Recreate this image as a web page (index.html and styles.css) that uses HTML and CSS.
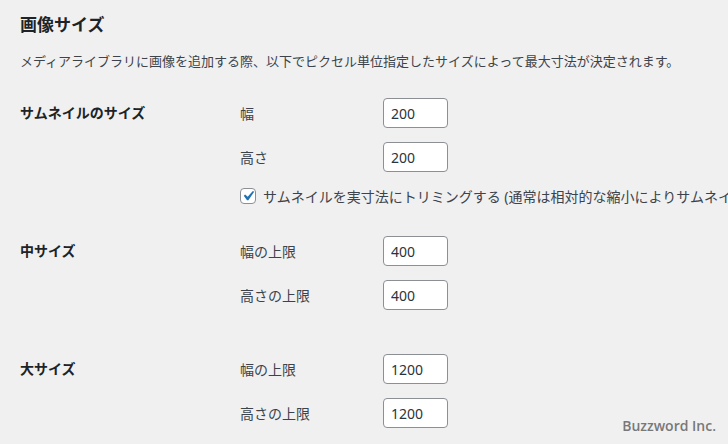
FILE: index.html
```html
<!DOCTYPE html>
<html>
<head>
    <meta charset="utf-8">
    <title>メディア設定</title>
    <link rel="stylesheet" href="styles.css">
</head>
<body>
    <div class="wrap">
        <h2>画像サイズ</h2>
        <p class="description">メディアライブラリに画像を追加する際、以下でピクセル単位指定したサイズによって最大寸法が決定されます。</p>

        <div class="size-row thumb">
            <div class="row-label">サムネイルのサイズ</div>
            <div class="fields">
                <div class="field">
                    <label class="field-label">幅</label>
                    <input type="text" class="small-text" value="200">
                </div>
                <div class="field">
                    <label class="field-label">高さ</label>
                    <input type="text" class="small-text" value="200">
                </div>
                <div class="check-line">
                    <span class="checkbox">
                        <svg viewBox="0 0 20 20" width="20" height="20"><path d="M14.83 4.89l1.34.94-5.81 8.38H9.02L5.78 9.67l1.34-1.25 2.57 2.4z" fill="#2271b1"/></svg>
                    </span>
                    <span>サムネイルを実寸法にトリミングする (通常は相対的な縮小によりサムネイルを作成します)</span>
                </div>
            </div>
        </div>

        <div class="size-row medium">
            <div class="row-label">中サイズ</div>
            <div class="fields">
                <div class="field">
                    <label class="field-label">幅の上限</label>
                    <input type="text" class="small-text" value="400">
                </div>
                <div class="field">
                    <label class="field-label">高さの上限</label>
                    <input type="text" class="small-text" value="400">
                </div>
            </div>
        </div>

        <div class="size-row large">
            <div class="row-label">大サイズ</div>
            <div class="fields">
                <div class="field">
                    <label class="field-label">幅の上限</label>
                    <input type="text" class="small-text" value="1200">
                </div>
                <div class="field">
                    <label class="field-label">高さの上限</label>
                    <input type="text" class="small-text" value="1200">
                </div>
            </div>
        </div>
    </div>

    <div class="credit">Buzzword Inc.</div>
</body>
</html>
```

FILE: styles.css
```css
html, body {
    height: 100%;
}
body {
    margin: 0;
    background: #f0f0f1;
    color: #3c434a;
    font-family: "Noto Sans", "Noto Sans CJK JP", sans-serif;
    font-size: 14px;
    overflow: hidden;
    position: relative;
}
.wrap {
    padding: 14px 20px 0;
    white-space: nowrap;
}
h2 {
    margin: 0;
    font-size: 17px;
    line-height: 22px;
    font-weight: 700;
    color: #1d2327;
}
.description {
    margin: 15px 0 0;
    font-size: 13px;
    line-height: 20px;
}
.size-row {
    display: flex;
}
.thumb {
    margin-top: 27px;
}
.medium {
    margin-top: 30px;
}
.large {
    margin-top: 44px;
}
.row-label {
    width: 220px;
    flex-shrink: 0;
    line-height: 30px;
    font-weight: 700;
    color: #1d2327;
}
.fields {
    display: flex;
    flex-direction: column;
    gap: 14px;
}
.field {
    display: flex;
    align-items: center;
    height: 30px;
}
.field-label {
    width: 143px;
}
.small-text {
    box-sizing: border-box;
    width: 65px;
    height: 30px;
    padding: 0 7px;
    border: 1px solid #8c8f94;
    border-radius: 4px;
    background: #fff;
    color: #2c3338;
    font-family: "Noto Sans", "Noto Sans CJK JP", sans-serif;
    font-size: 14px;
}
.check-line {
    display: flex;
    align-items: center;
    gap: 7px;
    height: 20px;
}
.checkbox {
    box-sizing: border-box;
    width: 16px;
    height: 16px;
    border: 1px solid #8c8f94;
    border-radius: 4px;
    background: #fff;
    display: flex;
    align-items: center;
    justify-content: center;
    flex-shrink: 0;
}
.checkbox svg {
    width: 20px;
    height: 20px;
    flex-shrink: 0;
}
.credit {
    position: absolute;
    right: 12px;
    bottom: 9px;
    color: #787878;
    font-family: "Open Sans", sans-serif;
    font-weight: 600;
    font-size: 14px;
}
```
